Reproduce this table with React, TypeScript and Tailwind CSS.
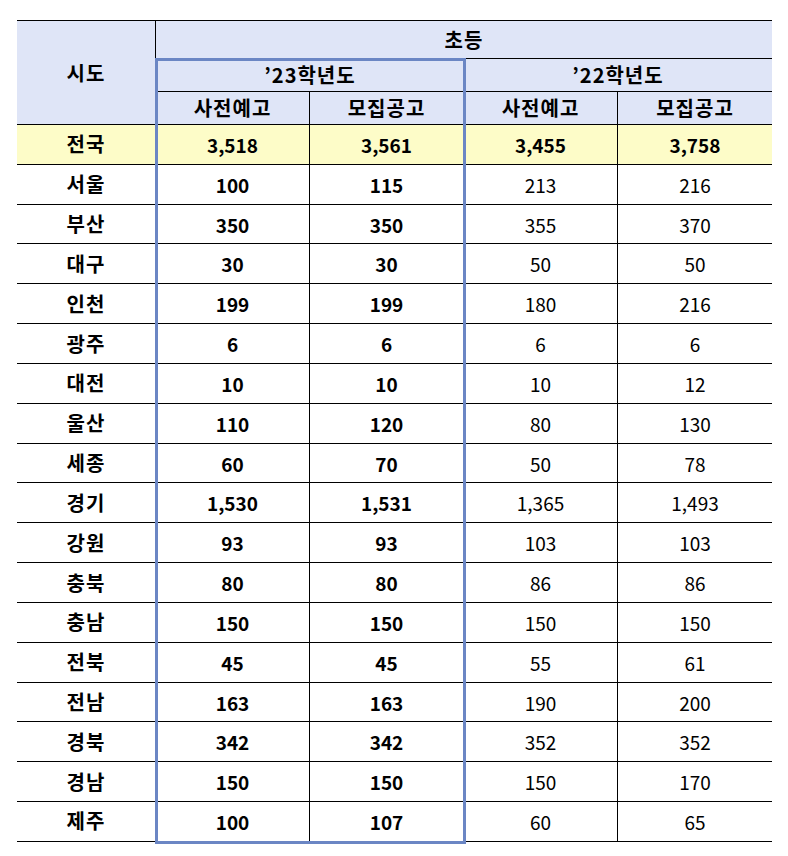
const rows: [string, string, string, string, string][] = [
  ["전국", "3,518", "3,561", "3,455", "3,758"],
  ["서울", "100", "115", "213", "216"],
  ["부산", "350", "350", "355", "370"],
  ["대구", "30", "30", "50", "50"],
  ["인천", "199", "199", "180", "216"],
  ["광주", "6", "6", "6", "6"],
  ["대전", "10", "10", "10", "12"],
  ["울산", "110", "120", "80", "130"],
  ["세종", "60", "70", "50", "78"],
  ["경기", "1,530", "1,531", "1,365", "1,493"],
  ["강원", "93", "93", "103", "103"],
  ["충북", "80", "80", "86", "86"],
  ["충남", "150", "150", "150", "150"],
  ["전북", "45", "45", "55", "61"],
  ["전남", "163", "163", "190", "200"],
  ["경북", "342", "342", "352", "352"],
  ["경남", "150", "150", "150", "170"],
  ["제주", "100", "107", "60", "65"],
];

const cell = "flex items-center justify-center border-b border-black";
const head = "bg-[#dfe5f7] font-bold text-[20px] tracking-[1px]";

const App = () => {
  return (
    <div
      className="min-h-[856px] w-[788px] bg-white pl-[17px] pt-[20px] text-[19px] leading-none text-black"
      style={{ fontFamily: '"Noto Sans CJK KR", "Noto Sans", sans-serif' }}
    >
      <div className="relative w-[755px]">
        <div className="grid grid-cols-[139px_154px_154px_154px_154px] grid-rows-[38px_33px_33px_repeat(18,39.83px)] border-t border-black text-center">
          <div className={`${cell} ${head} row-span-3 border-r`}>시도</div>
          <div className={`${cell} ${head} col-span-4`}>초등</div>
          <div className={`${cell} ${head} col-span-2`}>’23학년도</div>
          <div className={`${cell} ${head} col-span-2`}>’22학년도</div>
          <div className={`${cell} ${head} border-r`}>사전예고</div>
          <div className={`${cell} ${head} border-r`}>모집공고</div>
          <div className={`${cell} ${head} border-r`}>사전예고</div>
          <div className={`${cell} ${head}`}>모집공고</div>

          {rows.map((r, i) => {
            const total = i === 0;
            const bg = total ? "bg-[#fdfcc8]" : "";
            const rest = total ? "font-bold" : "";
            return (
              <div key={r[0]} className="contents">
                <div className={`${cell} ${bg} border-r text-[20px] font-bold tracking-[1px]`}>{r[0]}</div>
                <div className={`${cell} ${bg} border-r font-bold`}>{r[1]}</div>
                <div className={`${cell} ${bg} border-r font-bold`}>{r[2]}</div>
                <div className={`${cell} ${bg} ${rest} border-r`}>{r[3]}</div>
                <div className={`${cell} ${bg} ${rest}`}>{r[4]}</div>
              </div>
            );
          })}
        </div>
        {/* highlight frame around the '23 columns */}
        <div className="pointer-events-none absolute left-[138px] top-[38px] h-[786px] w-[311px] border-[3px] border-[#6b86c4]" />
      </div>
    </div>
  );
};

export default App;
